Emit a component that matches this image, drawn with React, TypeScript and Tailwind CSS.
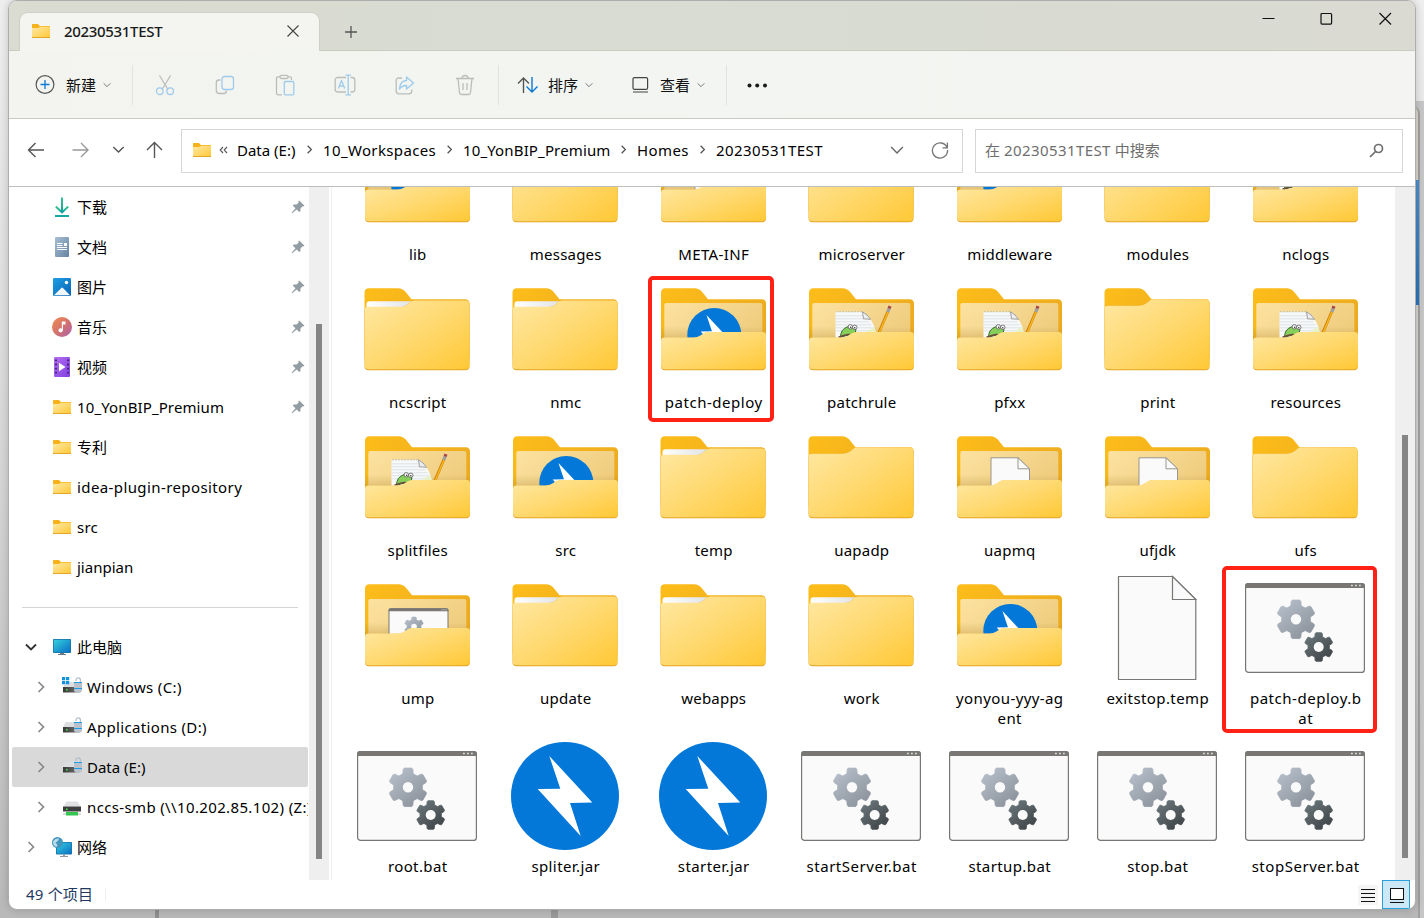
import React from "react";

type Kind = "jar" | "empty" | "paper" | "page" | "note" | "script" | "file" | "bat" | "jarfile";

const FONT = "font-['Noto_Sans','Noto_Sans_CJK_SC',sans-serif]";

function gearPath(cx: number, cy: number, r: number): string {
  const pts: string[] = [];
  for (let i = 0; i < 6; i++) {
    const base = -90 + i * 60;
    const steps: [number, number][] = [
      [-21, 0.74],
      [-15, 0.95],
      [-11, 1],
      [11, 1],
      [15, 0.95],
      [21, 0.74],
    ];
    steps.forEach(([a, k]) => {
      const t = ((base + a) * Math.PI) / 180;
      pts.push(`${(cx + Math.cos(t) * r * k).toFixed(2)} ${(cy + Math.sin(t) * r * k).toFixed(2)}`);
    });
  }
  return `M${pts.join("L")}Z`;
}

function Defs() {
  return (
    <svg className="absolute h-0 w-0" aria-hidden="true">
      <defs>
        <linearGradient id="front" x1="0" y1="0" x2="1" y2="1">
          <stop offset="0" stopColor="#ffe8a3" />
          <stop offset="0.5" stopColor="#ffd970" />
          <stop offset="1" stopColor="#ffc835" />
        </linearGradient>
        <linearGradient id="back" x1="0" y1="0" x2="1" y2="0.6">
          <stop offset="0" stopColor="#fdbd19" />
          <stop offset="1" stopColor="#ebaa20" />
        </linearGradient>
        <linearGradient id="inner" x1="0" y1="0" x2="1" y2="0.6">
          <stop offset="0" stopColor="#fce2a0" />
          <stop offset="1" stopColor="#eecb7c" />
        </linearGradient>
        <linearGradient id="shade" x1="0" y1="0" x2="0" y2="1">
          <stop offset="0" stopColor="#a07820" stopOpacity="0" />
          <stop offset="1" stopColor="#a07820" stopOpacity="0.3" />
        </linearGradient>
        <linearGradient id="sheet" x1="0" y1="0" x2="1" y2="0">
          <stop offset="0" stopColor="#ffffff" />
          <stop offset="1" stopColor="#dddfe1" />
        </linearGradient>
        <linearGradient id="gearLight" x1="0" y1="0" x2="0.8" y2="1">
          <stop offset="0" stopColor="#b9c3ce" />
          <stop offset="1" stopColor="#8b929b" />
        </linearGradient>
        <linearGradient id="gearDark" x1="0" y1="0" x2="0.8" y2="1">
          <stop offset="0" stopColor="#6d7a80" />
          <stop offset="1" stopColor="#3f4447" />
        </linearGradient>
        <linearGradient id="down" x1="0" y1="0" x2="0" y2="1">
          <stop offset="0" stopColor="#35c48d" />
          <stop offset="1" stopColor="#0fa3a3" />
        </linearGradient>
        <linearGradient id="doc" x1="0" y1="0" x2="1" y2="1">
          <stop offset="0" stopColor="#a9bed3" />
          <stop offset="1" stopColor="#6484a3" />
        </linearGradient>
        <linearGradient id="pic" x1="0" y1="0" x2="1" y2="1">
          <stop offset="0" stopColor="#1c9fe4" />
          <stop offset="1" stopColor="#0c62b5" />
        </linearGradient>
        <linearGradient id="music" x1="0" y1="0" x2="1" y2="1">
          <stop offset="0" stopColor="#f08f52" />
          <stop offset="0.5" stopColor="#d5726c" />
          <stop offset="1" stopColor="#a961b0" />
        </linearGradient>
        <linearGradient id="video" x1="0" y1="0" x2="1" y2="1">
          <stop offset="0" stopColor="#b36ef2" />
          <stop offset="1" stopColor="#7f3fe0" />
        </linearGradient>
        <linearGradient id="screen" x1="0" y1="0" x2="1" y2="1">
          <stop offset="0" stopColor="#33cfe0" />
          <stop offset="1" stopColor="#0a6fc2" />
        </linearGradient>
        <linearGradient id="drive" x1="0" y1="0" x2="1" y2="0">
          <stop offset="0" stopColor="#3a3a3a" />
          <stop offset="1" stopColor="#6a6a6a" />
        </linearGradient>
      </defs>
    </svg>
  );
}

const BOLT = "M44.3 14L87.3 60.4L65 61L75.7 94L32.7 47L55.3 46.7Z";

function Thumb({ kind }: { kind: Kind }) {
  if (kind === "jar")
    return (
      <g transform="translate(30.8 29.6) scale(0.5)">
        <circle cx="60" cy="54" r="54" fill="#0478d8" />
        <path d={BOLT} fill="#fff" />
      </g>
    );
  if (kind === "page")
    return (
      <g stroke="#98968f" strokeWidth="1" fill="#fafafa">
        <path d="M41.5 90V31.5H68.5L80 42.5V90" />
        <path d="M68.5 31.5V42.5H80Z" />
      </g>
    );
  if (kind === "script")
    return (
      <g>
        <rect x="31.5" y="34.5" width="59" height="46" rx="1.5" fill="#fafafa" stroke="#787774" />
        <path d="M31 36Q31 34 33 34H89Q91 34 91 36V37H31Z" fill="#787774" />
        <path d="M84 35.5H89.5" stroke="#ddd" strokeWidth="1" strokeDasharray="1 1" />
        <path d={gearPath(56.5, 52.2, 10)} fill="url(#gearLight)" />
        <circle cx="56.5" cy="52.2" r="2.8" fill="#fafafa" />
      </g>
    );
  if (kind === "note")
    return (
      <g>
        <path d="M34 33.5H61Q66 35 69 41Q74 48 75 60V70H34Z" fill="#f7f8f8" />
        <path
          d="M34 37.5H62M34 40.5H63M34 43.5H68M34 46.5H70M34 49.5H72M34 52.5H73"
          stroke="#dde3ea"
          strokeWidth="1"
        />
        <path d="M35 33.5H61" stroke="#999" strokeWidth="1" strokeDasharray="1 2" />
        <path d="M61 33.5L62 40.5L69 41Q66 36 61 33.5Z" fill="#eee" stroke="#888" strokeWidth="0.8" />
        <path d="M58 60Q64 52 73 49L75 58V62Z" fill="#e9f1c9" />
        <path d="M39 59Q39 51 46 48.5Q52 48 54.500 51.500Q55 55 50 56.500Q44 57 39 59Z" fill="#86cf5a" stroke="#2e5a2b" strokeWidth="0.900" />
        <circle cx="48.800" cy="48.500" r="2.200" fill="#fff" stroke="#555" strokeWidth="0.800" />
        <circle cx="53.300" cy="49" r="2.200" fill="#fff" stroke="#555" strokeWidth="0.800" />
        <circle cx="49.200" cy="49" r="0.700" fill="#222" />
        <circle cx="53.300" cy="49.500" r="0.700" fill="#222" />
        <path d="M37 59L43 57L48 56" stroke="#6b4a3a" strokeWidth="1.600" fill="none" />
        <path d="M86.500 33L75.800 58" stroke="#c87c0c" strokeWidth="2.800" />
        <path d="M86.700 33L76.200 58" stroke="#f9b518" strokeWidth="1.600" />
        <path d="M86.300 33.500L87.700 30" stroke="#9ba0a6" strokeWidth="3.200" />
        <path d="M87.600 30.200L88.500 27.800" stroke="#a8434c" strokeWidth="3.200" />
      </g>
    );
  return null;
}

function FolderArt({ kind }: { kind: Kind }) {
  const closed = kind === "empty" || kind === "paper";
  const front = closed
    ? "M7.5 32Q7.5 28.7 11 28.7H44Q47.5 28.7 50 26.5L53 24Q55 22.3 58 22.3H109Q112.5 22.3 112.5 26V88Q112.5 92 108.5 92H11.5Q7.5 92 7.5 88Z"
    : "M7.5 63Q7.5 59.5 11 59.5H40Q44 59.5 47 57.5L50.5 55.2Q52.5 54 55.5 54H109Q112.5 54 112.5 57.5V88Q112.5 92 108.5 92H11.5Q7.5 92 7.5 88Z";
  const emptyFront =
    "M7.5 31Q7.5 27.5 11 27.5H42Q46.5 27.5 49.5 25L53 22Q54.5 21 57 21H109Q112.5 21 112.5 25V88Q112.5 92 108.5 92H11.5Q7.5 92 7.5 88Z";
  const shape = kind === "empty" ? emptyFront : front;
  return (
    <g transform={closed ? "translate(0 0.3)" : "translate(0.5 0.3)"}>
      <path
        d="M7.5 14.5Q7.5 10 12 10H41Q45.5 10 48.5 13.5L54.5 21H108Q112.5 21 112.5 25.5V80H7.5Z"
        fill="url(#back)"
      />
      {kind === "paper" && <path d="M9.5 34V26Q9.5 23 12.5 23H60V30Z" fill="url(#sheet)" />}
      {!closed && (
        <>
          <rect x="10.8" y="24.7" width="98" height="50" rx="2" fill="url(#inner)" />
          <path d="M7.5 48H112.5V62H7.5Z" fill="url(#shade)" />
          <Thumb kind={kind} />
        </>
      )}
      <path d={shape} fill="#e3a526" />
      <path d={shape} fill="url(#front)" transform={closed ? "translate(0 0.3) scale(1 0.985)" : "translate(0 0.8) scale(1 0.98)"} />
    </g>
  );
}

function FileArt({ kind }: { kind: Kind }) {
  return (
    <svg width="120" height="108" viewBox="0 0 120 108" className="block shrink-0">
      {kind === "jarfile" ? (
        <>
          <circle cx="60" cy="54" r="54" fill="#0478d8" />
          <path d={BOLT} fill="#fff" />
        </>
      ) : kind === "bat" ? (
        <>
          <rect x="0.6" y="9.6" width="118.8" height="88.8" rx="3" fill="#fafafa" stroke="#787774" strokeWidth="1.2" />
          <path d="M0 14V12Q0 9 3 9H117Q120 9 120 12V14Z" fill="#787774" />
          <path d="M106 11.5H107.800M110 11.5H111.800M114 11.5H115.800" stroke="#ddd" strokeWidth="1.6" />
          <path d={gearPath(51, 45.3, 19.6)} fill="url(#gearLight)" stroke="url(#gearLight)" strokeWidth="0.8" strokeLinejoin="round" />
          <circle cx="51" cy="45.3" r="5.2" fill="#fafafa" />
          <path d={gearPath(73.7, 73, 14.6)} fill="url(#gearDark)" stroke="url(#gearDark)" strokeWidth="0.8" strokeLinejoin="round" />
          <circle cx="73.7" cy="73" r="5" fill="#fafafa" />
        </>
      ) : kind === "file" ? (
        <g fill="#fafafa" stroke="#787774" strokeWidth="1.2">
          <path d="M21.5 2.5H75.5L98.8 25.5V105.5H21.5Z" />
          <path d="M75.5 2.5V25.5H98.8Z" />
        </g>
      ) : (
        <FolderArt kind={kind} />
      )}
    </svg>
  );
}

const FILES: [string, Kind][] = [
  ["lib", "jar"],
  ["messages", "empty"],
  ["META-INF", "page"],
  ["microserver", "empty"],
  ["middleware", "jar"],
  ["modules", "empty"],
  ["nclogs", "note"],
  ["ncscript", "paper"],
  ["nmc", "paper"],
  ["patch-deploy", "jar"],
  ["patchrule", "note"],
  ["pfxx", "note"],
  ["print", "empty"],
  ["resources", "note"],
  ["splitfiles", "note"],
  ["src", "jar"],
  ["temp", "paper"],
  ["uapadp", "empty"],
  ["uapmq", "page"],
  ["ufjdk", "page"],
  ["ufs", "empty"],
  ["ump", "script"],
  ["update", "paper"],
  ["webapps", "paper"],
  ["work", "paper"],
  ["yonyou-yyy-ag\nent", "jar"],
  ["exitstop.temp", "file"],
  ["patch-deploy.b\nat", "bat"],
  ["root.bat", "bat"],
  ["spliter.jar", "jarfile"],
  ["starter.jar", "jarfile"],
  ["startServer.bat", "bat"],
  ["startup.bat", "bat"],
  ["stop.bat", "bat"],
  ["stopServer.bat", "bat"],
];

function labelTracking(label: string): string {
  if (label.includes("deploy") || label.includes("Server")) return "tracking-[0.53px]";
  if (/[.-]/.test(label)) return "tracking-[0.4px]";
  return "tracking-[0.22px]";
}

function SmallFolder() {
  return (
    <svg width="20" height="20" viewBox="0 0 20 20" className="block shrink-0">
      <path d="M1 3.5Q1 3 1.5 3H7L8.8 5H18.5Q19 5 19 5.5V16H1Z" fill="#f5b21b" />
      <path d="M1 7H7L9 5.7H19V16.5H1Z" fill="url(#front)" />
      <path d="M1 16.5H19" stroke="#e3a526" strokeWidth="1" />
    </svg>
  );
}

function DriveIcon({ win }: { win?: boolean }) {
  return (
    <svg width="20" height="20" viewBox="0 0 20 20" className="block shrink-0">
      <path d="M3.5 5H14L16 10.5H1Z" fill="#dcdee0" />
      <rect x="1" y="10" width="14" height="5.5" fill="url(#drive)" />
      <rect x="4" y="12" width="1.5" height="1.5" fill="#3df03d" />
      {win && (
        <path d="M0 0H3.2V3.2H0ZM4 0H7.2V3.2H4ZM0 4H3.2V7.2H0ZM4 4H7.2V7.2H4Z" fill="#1090e0" />
      )}
      <path d="M14 4V3Q14 0.8 16.2 0.8Q18.4 0.8 18.4 3V6" fill="none" stroke="#b4bec8" strokeWidth="1.2" />
      <path d="M12 5H20V12.5Q20 16 16 16Q12 16 12 12.5Z" fill="#b8c2cc" />
      <path d="M12 5.5H20M12 11.5H20" stroke="#1f9ae8" strokeWidth="1" />
    </svg>
  );
}

function SideIcon({ name }: { name: string }) {
  if (name === "folder") return <SmallFolder />;
  if (name === "win") return <DriveIcon win />;
  if (name === "drive") return <DriveIcon />;
  return (
    <svg width="20" height="20" viewBox="0 0 20 20" className="block shrink-0 overflow-visible">
      {name === "down" && (
        <g fill="none" stroke="url(#down)" strokeWidth="1.9">
          <path d="M3.8 9.5L10 15.5L16.2 9.5" />
          <path d="M9 0.5H11V15H9Z" fill="url(#down)" stroke="none" />
          <path d="M3 18H17V20H3Z" fill="#14a8a0" stroke="none" />
        </g>
      )}
      {name === "doc" && (
        <>
          <rect x="3" y="0" width="14" height="20" rx="1" fill="url(#doc)" />
          <path d="M5 6.5H10.5M5 8.5H10.5M5 10.5H15M5 12.5H15" stroke="#fff" strokeWidth="1" />
          <rect x="12" y="6" width="3" height="3" fill="#fff" />
        </>
      )}
      {name === "pic" && (
        <>
          <rect x="1" y="1" width="18" height="18" rx="1.2" fill="url(#pic)" />
          <circle cx="14.5" cy="5.5" r="1.7" fill="#fff" />
          <path d="M2 18.3L9.3 11Q10.2 10.2 11 11L18 18.3Z" fill="#f2f7fc" />
        </>
      )}
      {name === "music" && (
        <>
          <circle cx="10" cy="10" r="10" fill="url(#music)" />
          <circle cx="8.6" cy="13.3" r="2.1" fill="#fff" />
          <path d="M9.8 13.5V4.5H13.5V7.5H11V13.5Z" fill="#fff" />
        </>
      )}
      {name === "video" && (
        <>
          <rect x="2" y="0" width="16" height="20" rx="1" fill="url(#video)" />
          <path d="M4 2.5V19M16 2.5V19" stroke="#3e2569" strokeWidth="1.8" strokeDasharray="1.8 2.3" />
          <path d="M7 5.8L13.5 10L7 14.2Z" fill="#fff" />
        </>
      )}
      {name === "pc" && (
        <>
          <rect x="1" y="2" width="18" height="14" rx="0.8" fill="#1675a8" />
          <rect x="1.8" y="2.8" width="16.4" height="12.4" fill="url(#screen)" />
          <path d="M8 16H12V17H14V18H6V17H8Z" fill="#6b7a88" />
        </>
      )}
      {name === "nas" && (
        <>
          <path d="M4.5 4.5H15.5L18.5 9.5H1.5Z" fill="#dfe1e3" />
          <rect x="1" y="9.5" width="18" height="5" fill="#3e3e3e" />
          <rect x="4" y="11.5" width="1.5" height="1.5" fill="#3df03d" />
          <path d="M1 17H19" stroke="#b5b5b5" />
          <rect x="4" y="15" width="12" height="3.5" fill="#33c651" />
        </>
      )}
      {name === "net" && (
        <>
          <rect x="4" y="5" width="16" height="12.5" rx="0.8" fill="#1675a8" />
          <rect x="4.8" y="5.8" width="14.4" height="11" fill="url(#screen)" />
          <path d="M11 17.5H13V19H16V20H8V19H11Z" fill="#8d98a3" />
          <circle cx="5.5" cy="5.5" r="5.5" fill="#4295bd" />
          <path d="M2 3Q4 1 7 1.5L6 4L3.5 5.5L5.5 8L4.5 10Q1 9 1 5Z" fill="#b9dceb" />
        </>
      )}
    </svg>
  );
}

function Pin() {
  return (
    <svg width="14" height="14" viewBox="0 0 14 14" className="block">
      <path
        d="M8.2 0.5L13.5 5.7L12.6 6.6L11.5 6.3L9.5 8.5L9.4 11.2L8.3 12.1L5.6 9.4L1.2 13.3L0.6 12.7L4.5 8.3L1.8 5.6L2.7 4.6L5.5 4.5L7.7 2.5L7.3 1.4Z"
        fill="#929ca3"
      />
    </svg>
  );
}

type SideItem = { label: string; icon: string; pin?: boolean; track?: string };

const QUICK: SideItem[] = [
  { label: "下载", icon: "down", pin: true },
  { label: "文档", icon: "doc", pin: true },
  { label: "图片", icon: "pic", pin: true },
  { label: "音乐", icon: "music", pin: true },
  { label: "视频", icon: "video", pin: true },
  { label: "10_YonBIP_Premium", icon: "folder", pin: true, track: "tracking-[0.12px]" },
  { label: "专利", icon: "folder" },
  { label: "idea-plugin-repository", icon: "folder", track: "tracking-[0.4px]" },
  { label: "src", icon: "folder", track: "tracking-[0.2px]" },
  { label: "jianpian", icon: "folder" },
];

const DRIVES: SideItem[] = [
  { label: "Windows (C:)", icon: "win", track: "tracking-[0.36px]" },
  { label: "Applications (D:)", icon: "drive", track: "tracking-[0.34px]" },
  { label: "Data (E:)", icon: "drive" },
  { label: "nccs-smb (\\\\10.202.85.102) (Z:)", icon: "nas", track: "tracking-[0.36px]" },
];

function Chevron({ dir, size, color, width }: { dir: "down" | "right"; size: number; color: string; width: number }) {
  return (
    <svg width={size} height={size} viewBox="0 0 12 12" className="block shrink-0" fill="none" stroke={color} strokeWidth={width}>
      <path d={dir === "down" ? "M1 3.5L6 8.5L11 3.5" : "M3.5 1L8.5 6L3.5 11"} />
    </svg>
  );
}

function Sidebar() {
  return (
    <nav className="flex w-[300px] shrink-0 flex-col overflow-hidden text-[15px] text-black">
      {QUICK.map((q) => (
        <div key={q.label} className="flex h-10 shrink-0 items-center pl-[43px] pr-1">
          <SideIcon name={q.icon} />
          <span className={`ml-[5px] grow whitespace-nowrap leading-5 ${q.track ?? ""}`}>{q.label}</span>
          {q.pin && <Pin />}
        </div>
      ))}
      <div className="mb-[19px] ml-[13px] mr-[11px] mt-5 h-px shrink-0 bg-[#d4d4d4]" />
      <div className="flex h-10 shrink-0 items-center pl-4">
        <Chevron dir="down" size={12} color="#333" width={1.9} />
        <div className="ml-[15px]">
          <SideIcon name="pc" />
        </div>
        <span className="ml-[5px] leading-5">此电脑</span>
      </div>
      {DRIVES.map((d, i) => (
        <div
          key={d.label}
          className={`ml-[3px] mr-px flex h-10 shrink-0 items-center overflow-hidden rounded-[2px] pl-[23px] ${i === 2 ? "bg-[#d9d9d9]" : ""}`}
        >
          <Chevron dir="right" size={12} color="#8a8a8a" width={1.7} />
          <div className="ml-[15px] shrink-0">
            <SideIcon name={d.icon} />
          </div>
          <span className={`ml-[5px] whitespace-nowrap leading-5 ${d.track ?? ""}`}>{d.label}</span>
        </div>
      ))}
      <div className="flex h-10 shrink-0 items-center pl-4">
        <Chevron dir="right" size={12} color="#8a8a8a" width={1.7} />
        <div className="ml-[15px]">
          <SideIcon name="net" />
        </div>
        <span className="ml-[5px] leading-5">网络</span>
      </div>
    </nav>
  );
}

function TitleBar() {
  return (
    <header className="flex h-[50px] shrink-0 justify-between border-b border-[#c8cdc0] bg-linear-to-r from-[#dadbd1] via-[#d8dcd2] to-[#dadad2]">
      <div className="flex items-end">
        <div className="-mb-px ml-[10px] flex h-[39px] w-[301px] items-center rounded-t-[9px] border border-b-0 border-[#cdd0c6] bg-[#f4f5f0] pb-0.5 pl-[11px]">
          <SmallFolder />
          <span className="ml-[13px] text-[15px] font-medium leading-5 tracking-[-0.32px] text-[#1a1a1a]">20230531TEST</span>
          <svg width="12" height="12" viewBox="0 0 12 12" className="ml-auto mr-5" stroke="#444" strokeWidth="1.1">
            <path d="M0.5 0.5L11.5 11.5M11.5 0.5L0.5 11.5" />
          </svg>
        </div>
        <svg width="12" height="12" viewBox="0 0 12 12" className="mb-[12px] ml-[25px]" stroke="#555" strokeWidth="1.3">
          <path d="M6 0V12M0 6H12" />
        </svg>
      </div>
      <svg width="132" height="14" viewBox="0 0 132 14" className="mr-[22px] mt-[11px]" fill="none" stroke="#111" strokeWidth="1.2">
        <path d="M1.5 6.500H13.5" />
        <rect x="60" y="1.500" width="10.600" height="10.600" rx="1" />
        <path d="M118.500 1L130 12.500M130 1L118.500 12.500" />
      </svg>
    </header>
  );
}

function Sep() {
  return <div className="h-10 w-px shrink-0 bg-[#e2e3df]" />;
}

function Tool({ children }: { children: React.ReactNode }) {
  return (
    <div className="flex w-[60px] shrink-0 justify-center">
      <svg width="22" height="22" viewBox="0 0 22 22" fill="none" stroke="#bbbdbb" strokeWidth="1.3" strokeLinejoin="round">
        {children}
      </svg>
    </div>
  );
}

const BLUE = "#9ecbec";

function Toolbar() {
  return (
    <div className="flex h-[68px] shrink-0 items-center border-b border-[#c9ccc2] bg-linear-to-r from-[#f3f4f0] via-[#f2f5f1] to-[#f4f4f2] text-[15px] text-[#111]">
      <div className="flex w-[123px] shrink-0 items-center pl-[26px]">
        <svg width="20" height="20" viewBox="0 0 20 20" fill="none" className="shrink-0">
          <circle cx="10" cy="9.500" r="8.900" stroke="#555" strokeWidth="1.200" />
          <path d="M10 5V14M5.500 9.500H14.500" stroke="#0a78d4" strokeWidth="1.300" />
        </svg>
        <span className="ml-[11px] mr-[7px] leading-5">新建</span>
        <Chevron dir="down" size={8} color="#777" width={1.5} />
      </div>
      <Sep />
      <div className="flex w-[365px] shrink-0 pl-[2px]">
        <Tool>
          <path d="M5.5 1.5L14 15.5M16.5 1.5L8 15.5" />
          <circle cx="5.8" cy="17.2" r="3.3" stroke={BLUE} />
          <circle cx="16.2" cy="17.2" r="3.3" stroke={BLUE} />
        </Tool>
        <Tool>
          <path d="M6.5 6H5Q2.3 6 2.3 8.5V16.5Q2.3 19.5 5.5 19.5H10Q12.5 19.5 12.5 16.5" />
          <rect x="8" y="2.5" width="11.5" height="13" rx="2.5" stroke={BLUE} />
        </Tool>
        <Tool>
          <path d="M6 2.8H4Q2.5 2.8 2.5 4.5V19Q2.5 20.8 4 20.8H8M14 2.8H16Q17.5 2.8 17.5 4.5V6" />
          <rect x="6" y="1.3" width="8" height="3.2" rx="1.5" />
          <rect x="10.3" y="7.5" width="9.5" height="13.3" rx="1.2" stroke={BLUE} />
        </Tool>
        <Tool>
          <path d="M12 3.5H4Q1.2 3.5 1.2 6V15.5Q1.2 18 4 18H12M16.5 3.5H18Q20.8 3.5 20.8 6V15.5Q20.8 18 18 18H16.5" />
          <path d="M11.5 1.2H17M14.2 1.2V20.8M11.5 20.8H17M4.3 14.5L7.5 6.5L10.7 14.5M5.3 12H9.7" stroke={BLUE} />
        </Tool>
        <Tool>
          <path d="M8 4H5Q2.2 4 2.2 6.5V17Q2.2 19.8 5 19.8H15Q17.800 19.8 17.8 17V15.5" />
          <path d="M12.5 3L19.5 9L12.5 15V11.5Q8 11.5 5.5 15Q6 6.8 12.5 6.5Z" stroke={BLUE} />
        </Tool>
        <Tool>
          <path d="M2 4.5H20M4 4.5L5.5 18.5Q5.7 20.5 7.5 20.5H14.5Q16.3 20.5 16.5 18.5L18 4.5M8 4.5Q8 1.5 11 1.5Q14 1.5 14 4.5M9 9V16M13 9V16" />
        </Tool>
      </div>
      <Sep />
      <div className="flex w-[133px] shrink-0 items-center pl-[18px]">
        <svg width="22" height="18" viewBox="0 0 22 18" fill="none" strokeWidth="1.4" className="shrink-0">
          <path d="M6.5 17V2M1 7.5L6.5 2L12 7.5" stroke="#555" />
          <path d="M15 1V16M9.5 10.5L15 16L20.5 10.5" stroke="#0a78d4" />
        </svg>
        <span className="ml-[9px] mr-[7px] leading-5">排序</span>
        <Chevron dir="down" size={8} color="#777" width={1.5} />
      </div>
      <svg width="18" height="18" viewBox="0 0 18 18" fill="none" stroke="#444" className="shrink-0">
        <rect x="1" y="1.6" width="14.6" height="11.8" rx="1.5" strokeWidth="1.2" />
        <path d="M1 16H16" strokeWidth="1.2" />
      </svg>
      <span className="ml-[10px] mr-[7px] leading-5">查看</span>
      <Chevron dir="down" size={8} color="#777" width={1.5} />
      <div className="ml-[21px] mr-5">
        <Sep />
      </div>
      <svg width="22" height="6" viewBox="0 0 22 6" fill="#1a1a1a">
        <circle cx="2.5" cy="3.4" r="2" />
        <circle cx="10.2" cy="3.4" r="2" />
        <circle cx="18" cy="3.4" r="2" />
      </svg>
    </div>
  );
}

function AddressBar() {
  const crumbs: [string, string][] = [
    ["Data (E:)", "w-[60px]"],
    ["10_Workspaces", "w-[114px] tracking-[0.36px]"],
    ["10_YonBIP_Premium", "w-[148px] tracking-[0.14px]"],
    ["Homes", "w-[53px] tracking-[0.4px]"],
    ["20230531TEST", "w-[108px] tracking-[0.42px]"],
  ];
  return (
    <div className="flex h-[68px] shrink-0 items-center border-b border-[#bdbdbd] bg-white pb-1 text-[15px]">
      <svg width="172" height="20" viewBox="0 0 172 20" fill="none" strokeWidth="1.4" className="-mt-px shrink-0">
        <path d="M35 10H20M26.5 3L19.5 10L26.5 17" stroke="#555" />
        <path d="M63.5 10H78.5M72 3L79 10L72 17" stroke="#999" />
        <path d="M104.3 7L109.5 12L114.7 7" stroke="#555" />
        <path d="M145.5 18V3M138 10L145.5 2.5L153 10" stroke="#555" />
      </svg>
      <div className="flex h-11 w-[782px] shrink-0 items-center border border-[#d6d6d6] pb-0.5 pl-[10px]">
        <SmallFolder />
        <svg width="9" height="8" viewBox="0 0 9 8" fill="none" stroke="#555" strokeWidth="1.1" className="ml-[7px] mr-[9px] shrink-0">
          <path d="M4 1L1.2 4L4 7M8 1L5.2 4L8 7" />
        </svg>
        {crumbs.map(([c, w], i) => (
          <React.Fragment key={c}>
            {i > 0 && (
              <div className="flex w-[26px] shrink-0 justify-center pr-px">
                <Chevron dir="right" size={9} color="#555" width={1.7} />
              </div>
            )}
            <span className={`shrink-0 whitespace-nowrap leading-5 text-black ${w}`}>{c}</span>
          </React.Fragment>
        ))}
        <div className="ml-auto flex items-center gap-[27px] pr-[13px]">
          <Chevron dir="down" size={14} color="#666" width={1.2} />
          <svg width="18" height="18" viewBox="0 0 18 18" fill="none" stroke="#777" strokeWidth="1.3">
            <path d="M16 6.5A7.6 7.6 0 1 0 16.6 9M16.4 1.5V6.8H11.5" />
          </svg>
        </div>
      </div>
      <div className="ml-3 flex h-11 w-[428px] shrink-0 items-center justify-between border border-[#d6d6d6] pl-[9px] pr-[18px] text-[#6e6e6e]">
        <span className="-mt-0.5 leading-5">
          在 <span className="tracking-[0.42px]">20230531TEST</span> 中搜索
        </span>
        <svg width="15" height="15" viewBox="0 0 15 15" fill="none" stroke="#707070" strokeWidth="1.7">
          <circle cx="9.5" cy="5.5" r="4" />
          <path d="M6.5 8.5L1 14" />
        </svg>
      </div>
    </div>
  );
}

function Scrollbar({ top, height }: { top: number; height: number }) {
  return (
    <div className="flex w-5 shrink-0 flex-col bg-[#efefef]">
      <div className="ml-[7px] w-[6px] bg-[#858585]" style={{ marginTop: top, height }} />
    </div>
  );
}

export default function App() {
  return (
    <div className={`relative h-[918px] w-[1424px] overflow-hidden bg-linear-to-b from-[#efefef] via-[#d6d6d6] to-[#b9b9b9] pl-2 ${FONT}`}>
      <Defs />
      <div className="absolute right-0 top-[101px] h-[817px] w-4 bg-[#c6c6c6]" />
      <div className="absolute right-1 top-[106px] h-[812px] w-4 rounded-tr-lg border-r-2 border-[#a0a0a0] bg-linear-to-b from-[#d9d6ca] via-[#d2d4d6] to-[#b8b8b8]" />
      <div className="absolute right-[5px] top-[180px] h-[125px] w-4 bg-linear-to-b from-[#4b8fd0] to-[#2574c0]" />
      <div className="absolute bottom-0 left-[155px] h-2 w-[4px] bg-[#8f8f8f]" />
      <div className="absolute bottom-0 left-[551px] h-2 w-[7px] bg-[#999]" />
      <div className="relative flex h-[910px] w-[1408px] flex-col overflow-hidden rounded-[9px] border border-[#adadad] bg-white shadow-[0_0_8px_rgba(0,0,0,0.18)]">
        <TitleBar />
        <Toolbar />
        <AddressBar />
        <div className="flex h-[693px] shrink-0">
          <Sidebar />
          <Scrollbar top={137} height={535} />
          <div className="ml-[2px] w-px shrink-0 bg-[#f0f0f0]" />
          <main className="relative h-[693px] w-[1063px] shrink-0 overflow-hidden pl-[11px]">
            <div className="-mt-[57px] grid w-[1036px] grid-cols-7">
              {FILES.map(([label, kind], i) => (
                <div key={i} className="flex min-h-[148px] flex-col items-center pb-[14px]">
                  <FileArt kind={kind} />
                  <span className={`mt-[6px] whitespace-pre pl-[1.5px] text-center text-[15px] leading-5 text-black ${labelTracking(label)}`}>
                    {label}
                  </span>
                </div>
              ))}
            </div>
            <div className="absolute left-[316px] top-[89px] h-[146px] w-[126px] rounded-[5px] border-4 border-[#ff2116]" />
            <div className="absolute left-[890px] top-[379px] h-[167px] w-[155px] rounded-[5px] border-4 border-[#ff2116]" />
          </main>
          <Scrollbar top={248} height={423} />
        </div>
        <footer className="flex h-[29px] shrink-0 items-center text-[15px] text-[#1e3a5f]">
          <span className="-mt-0.5 ml-[17px] leading-5 tracking-[0.2px]">49 个项目</span>
          <div className="ml-3 h-[13px] w-px bg-[#eee]" />
          <div className="ml-auto mr-[4px] flex h-5 w-5 items-center justify-center bg-[#f5f5f5]">
            <svg width="14" height="14" viewBox="0 0 14 14" stroke="#111" strokeWidth="1">
              <path d="M0 1.5H14M0 5.5H14M0 9.5H14M0 13.5H14" />
            </svg>
          </div>
          <div className="mr-[5px] flex h-[29px] w-7 items-center justify-center border border-[#2a9fdc] bg-[#cce8f6] pl-px pt-px">
            <svg width="16" height="15" viewBox="0 0 16 15" fill="none" stroke="#111" strokeWidth="1">
              <rect x="1.5" y="0.5" width="13" height="11" fill="#fff" />
              <path d="M1 14.5H15" />
            </svg>
          </div>
        </footer>
      </div>
    </div>
  );
}
